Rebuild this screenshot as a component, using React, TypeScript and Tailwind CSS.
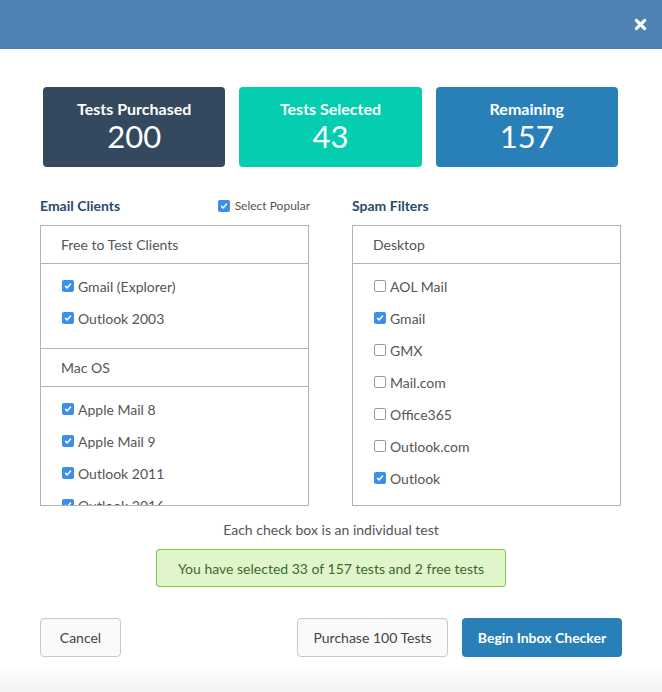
import { FaTimes } from "react-icons/fa";

type Item = { label: string; checked: boolean };

const font = { fontFamily: "Lato, 'Open Sans', sans-serif" };

function Check({ checked }: { checked: boolean }) {
  if (checked) {
    return (
      <span className="flex h-[12px] w-[12px] shrink-0 items-center justify-center rounded-[2px] bg-[#3b8eea]">
        <svg viewBox="0 0 12 12" className="h-[10px] w-[10px]" fill="none" stroke="white" strokeWidth={1.8} strokeLinecap="round" strokeLinejoin="round">
          <path d="M3 6.3l2 2 4-4.6" />
        </svg>
      </span>
    );
  }
  return <span className="h-[12px] w-[12px] shrink-0 rounded-[2px] border border-[#9a9a9a] bg-white" />;
}

function Section({ title, items, last }: { title: string; items: Item[]; last?: boolean }) {
  return (
    <div>
      <div className="flex h-[38px] items-center border-b border-[#b3b3b3] px-[20px] pb-[1px] text-[14px] text-[#555]">
        {title}
      </div>
      <div className={`pt-[6px] ${last ? "" : "pb-[14px] border-b border-[#b3b3b3]"}`}>
        {items.map((it) => (
          <div key={it.label} className="flex h-[32px] items-center gap-[4px] px-[21px] text-[14px] text-[#555]">
            <Check checked={it.checked} />
            <span>{it.label}</span>
          </div>
        ))}
      </div>
    </div>
  );
}

const stats = [
  { title: "Tests Purchased", value: "200", bg: "bg-[#34495e]" },
  { title: "Tests Selected", value: "43", bg: "bg-[#05cdb0]" },
  { title: "Remaining", value: "157", bg: "bg-[#2980b9]" },
];

export default function App() {
  return (
    <div className="flex min-h-[692px] flex-col bg-white" style={font}>
      {/* Header */}
      <div className="flex h-[49px] items-center justify-end bg-[#4e82b3] pr-[13px]">
        <FaTimes className="h-[17px] w-[17px] text-white" />
      </div>

      {/* Stats */}
      <div className="mt-[38px] grid grid-cols-3 gap-[14px] pl-[43px] pr-[44px]">
        {stats.map((s) => (
          <div key={s.title} className={`flex h-[80px] flex-col items-center rounded-[4px] pt-[11px] text-white ${s.bg}`}>
            <span className="text-[16px] font-bold leading-[21px]">{s.title}</span>
            <span className="text-[31px] leading-[35px]">{s.value}</span>
          </div>
        ))}
      </div>

      {/* Lists */}
      <div className="mt-[30px] grid grid-cols-2 gap-[43px] pl-[40px] pr-[41px]">
        <div>
          <div className="flex h-[18px] items-center justify-between">
            <span className="text-[14px] font-bold leading-[18px] text-[#2b4a6d]">Email Clients</span>
            <span className="mr-[-1px] flex items-center gap-[5px] text-[12px] leading-[16px] text-[#555]">
              <Check checked />
              Select Popular
            </span>
          </div>
          <div className="mt-[10px] h-[281px] overflow-hidden border border-[#b3b3b3]">
            <Section
              title="Free to Test Clients"
              items={[
                { label: "Gmail (Explorer)", checked: true },
                { label: "Outlook 2003", checked: true },
              ]}
            />
            <Section
              title="Mac OS"
              last
              items={[
                { label: "Apple Mail 8", checked: true },
                { label: "Apple Mail 9", checked: true },
                { label: "Outlook 2011", checked: true },
                { label: "Outlook 2016", checked: true },
                { label: "Thunderbird", checked: true },
              ]}
            />
          </div>
        </div>
        <div>
          <div className="flex h-[18px] items-center">
            <span className="text-[14px] font-bold leading-[18px] text-[#2b4a6d]">Spam Filters</span>
          </div>
          <div className="mt-[10px] h-[281px] overflow-hidden border border-[#b3b3b3]">
            <Section
              title="Desktop"
              last
              items={[
                { label: "AOL Mail", checked: false },
                { label: "Gmail", checked: true },
                { label: "GMX", checked: false },
                { label: "Mail.com", checked: false },
                { label: "Office365", checked: false },
                { label: "Outlook.com", checked: false },
                { label: "Outlook", checked: true },
              ]}
            />
          </div>
        </div>
      </div>

      <p className="mt-[16px] text-center text-[14px] leading-[16px] text-[#555]">Each check box is an individual test</p>

      <div className="mx-auto mt-[11px] flex h-[38px] w-[350px] items-center justify-center rounded-[3px] border border-[#7cc852] bg-[#e0f6ca] text-[14px] text-[#3a6a34]">
        You have selected 33 of 157 tests and 2 free tests
      </div>

      {/* Buttons */}
      <div className="mt-[31px] flex items-center pl-[40px] pr-[40px]">
        <button className="h-[39px] w-[81px] rounded-[4px] border border-[#c8c8c8] bg-[#fafafa] text-[14px] text-[#444]">
          Cancel
        </button>
        <div className="ml-auto flex gap-[14px]">
          <button className="h-[39px] w-[151px] rounded-[4px] border border-[#c8c8c8] bg-[#fafafa] text-[14px] text-[#444]">
            Purchase 100 Tests
          </button>
          <button className="h-[39px] w-[160px] rounded-[4px] bg-[#2980b9] text-[14px] font-bold text-white">
            Begin Inbox Checker
          </button>
        </div>
      </div>

      <div className="mt-auto h-[26px] bg-gradient-to-b from-white to-[#f3f3f3]" />
    </div>
  );
}
